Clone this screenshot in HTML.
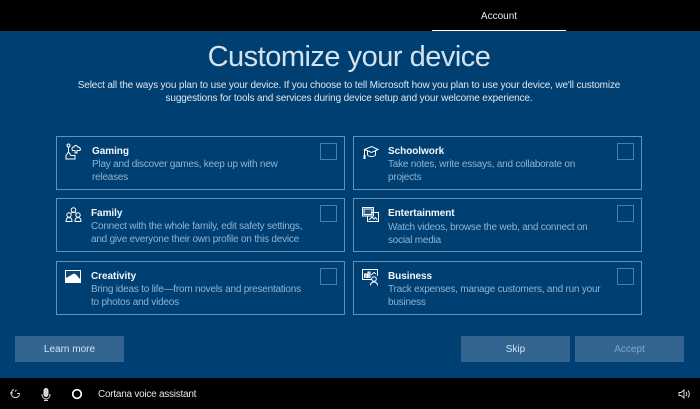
<!DOCTYPE html>
<html lang="en">
<head>
<meta charset="utf-8">
<title>Customize your device</title>
<style>
html,body{margin:0;padding:0;background:#000}
#p{position:relative;width:700px;height:409px;overflow:hidden;background:#003f71;font-family:"Liberation Sans",sans-serif;color:#fff;filter:blur(.3px)}
#p div,#p svg{position:absolute}
.t{white-space:nowrap}
.top{left:0;top:0;width:700px;height:31px;background:#000}
.bot{left:0;top:378px;width:700px;height:31px;background:#000}
.card{width:287px;height:52px;border:1px solid #5f93bb;box-sizing:content-box}
.chk{width:15px;height:15px;border:1px solid #4a7ea8}
.h{font-size:10px;font-weight:bold;color:#f2f7fb;line-height:12px;letter-spacing:-.05px}
.d{font-size:10px;color:#8db4d3;line-height:13px;white-space:nowrap;letter-spacing:-.22px}
.btn{height:26px;width:109px;background:#336590;font-size:10px;line-height:28px;text-align:center;color:#d5e5f2}
svg{fill:none;stroke:#fff;stroke-width:1}
</style>
</head>
<body>
<div id="p">
<div class="top"></div>
<div class="t" style="left:432px;top:9px;width:134px;text-align:center;font-size:10px;line-height:12px;color:#e8e8e8;margin-top:2px">Account</div>
<div style="left:432px;top:30px;width:134px;height:1px;background:#fff"></div>

<div class="t" style="left:0;top:39px;width:698px;text-align:center;font-size:29px;line-height:36px;color:#d3e2ee;letter-spacing:-.5px">Customize your device</div>
<div class="t" style="left:0;top:79px;width:698px;text-align:center;font-size:10px;line-height:13px;color:#dbe7f1;letter-spacing:-.14px">Select all the ways you plan to use your device. If you choose to tell Microsoft how you plan to use your device, we'll customize</div>
<div class="t" style="left:0;top:92px;width:698px;text-align:center;font-size:10px;line-height:13px;color:#dbe7f1;letter-spacing:-.14px">suggestions for tools and services during device setup and your welcome experience.</div>

<div class="card" style="left:56px;top:136px"></div>
<div class="card" style="left:56px;top:198px"></div>
<div class="card" style="left:56px;top:261px"></div>
<div class="card" style="left:353px;top:136px"></div>
<div class="card" style="left:353px;top:198px"></div>
<div class="card" style="left:353px;top:261px"></div>

<div class="chk" style="left:320px;top:143px"></div>
<div class="chk" style="left:320px;top:205px"></div>
<div class="chk" style="left:320px;top:268px"></div>
<div class="chk" style="left:617px;top:143px"></div>
<div class="chk" style="left:617px;top:205px"></div>
<div class="chk" style="left:617px;top:268px"></div>

<div class="h t" style="left:92px;top:146px">Gaming</div>
<div class="d" style="left:92px;top:158px">Play and discover games, keep up with new<br>releases</div>
<div class="h t" style="left:91px;top:208px">Family</div>
<div class="d" style="left:91px;top:220px">Connect with the whole family, edit safety settings,<br>and give everyone their own profile on this device</div>
<div class="h t" style="left:91px;top:271px">Creativity</div>
<div class="d" style="left:91px;top:283px">Bring ideas to life—from novels and presentations<br>to photos and videos</div>
<div class="h t" style="left:388px;top:146px">Schoolwork</div>
<div class="d" style="left:388px;top:158px">Take notes, write essays, and collaborate on<br>projects</div>
<div class="h t" style="left:388px;top:208px">Entertainment</div>
<div class="d" style="left:388px;top:221px">Watch videos, browse the web, and connect on<br>social media</div>
<div class="h t" style="left:388px;top:271px">Business</div>
<div class="d" style="left:388px;top:283px">Track expenses, manage customers, and run your<br>business</div>

<!-- Gaming -->
<svg style="left:65px;top:143px" width="17" height="17" viewBox="0 0 17 17"><circle cx="3.5" cy="2.5" r="1.5"/><path d="M3.5 4V9M1 16V12.5L3.5 9L6 12.5H10V16ZM7 6.5C6.5 4.5 8 4 9 4C9.5 2 12 2 12.5 4C15 4 16 6 15 7.5H12V10H10V7.5H7.5Z"/></svg>
<!-- Family -->
<svg style="left:65px;top:207px" width="17" height="15" viewBox="0 0 17 15"><circle cx="8.5" cy="3" r="2.3"/><circle cx="4" cy="8" r="2.2"/><circle cx="13" cy="8" r="2.2"/><path d="M1 14.5C1 11.5 2.5 10.5 4 10.5S7 11.5 7 14.5ZM10 14.5C10 11.5 11.5 10.5 13 10.5S16 11.5 16 14.5ZM5.5 6.8C6 5.8 7 5.3 8.5 5.3S11 5.8 11.5 6.8"/></svg>
<!-- Creativity -->
<svg style="left:65px;top:270px" width="16" height="13" viewBox="0 0 16 13"><rect x="0" y="0" width="16" height="13" fill="#fff" stroke="none"/><path d="M1 1H15V9L11 4.5L9 3.5L5.5 5.5L1 8Z" fill="#0d4777" stroke="none"/></svg>
<!-- Schoolwork -->
<svg style="left:362px;top:145px" width="17" height="15" viewBox="0 0 17 15"><path d="M2.5 4.5L9.5 1.5L16 4.5L9.5 7.5ZM5.5 6V10C7 12 12 12 13.5 10V6M2.5 4.5V10"/><rect x="1.5" y="10" width="2" height="4" fill="#fff" stroke="none"/></svg>
<!-- Entertainment -->
<svg style="left:362px;top:207px" width="17" height="15" viewBox="0 0 17 15"><rect x=".5" y=".5" width="11" height="8.5"/><rect x="2" y="2" width="8" height="5.5" fill="#fff" fill-opacity=".15"/><path d="M9.5 6.5V5.5H16.5V14.5H5.5V9.5"/><path d="M7 13L10 10L12 12L13.5 10.5L15.5 13"/></svg>
<!-- Business -->
<svg style="left:362px;top:269px" width="17" height="17" viewBox="0 0 17 17"><path d="M10 10.5H.5V.5H15.5V7"/><path d="M2.5 9V5H5V9M6 9V3H8V9" fill="#fff" fill-opacity=".6"/><path d="M9 6L12 3.5L14 5"/><circle cx="12" cy="10" r="2.3"/><path d="M8.5 16.5C8.5 14 10 13 12 13S15.5 14 15.5 16.5"/></svg>

<div class="btn" style="left:15px;top:336px">Learn more</div>
<div class="btn" style="left:461px;top:336px;color:#cfe3f3">Skip</div>
<div class="btn" style="left:575px;top:336px;color:#7fa5c6">Accept</div>

<div class="bot"></div>
<!-- ease of access -->
<svg style="left:9px;top:388px" width="12" height="12" viewBox="0 0 12 12" stroke-opacity=".85"><path d="M5 1.5A4.2 4.2 0 1 0 10.5 6.5M1 5H4M6 3.5L7.5 2M8 5.5H11"/></svg>
<!-- mic -->
<svg style="left:41px;top:388px" width="10" height="13" viewBox="0 0 10 13" stroke-opacity=".85"><rect x="3" y=".5" width="4" height="8" rx="2" fill="#ccc"/><path d="M1 6V7A4 4 0 0 0 9 7V6M5 11V12.5M3 12.5H7"/></svg>
<!-- cortana -->
<svg style="left:71px;top:388px" width="12" height="12" viewBox="0 0 12 12"><circle cx="6" cy="6" r="4.3" stroke-width="1.7"/></svg>
<div class="t" style="left:98px;top:389px;font-size:10px;line-height:12px;color:#e4e4e4;letter-spacing:-.25px">Cortana voice assistant</div>
<!-- volume -->
<svg style="left:678px;top:388px" width="13" height="12" viewBox="0 0 13 12" stroke-opacity=".85"><path d="M1 4.5V7.5H3L6 10V2L3 4.5Z"/><path d="M8 4C9 5 9 7 8 8M10 2.5C11.7 4.5 11.7 7.5 10 9.5"/></svg>
</div>
</body>
</html>
